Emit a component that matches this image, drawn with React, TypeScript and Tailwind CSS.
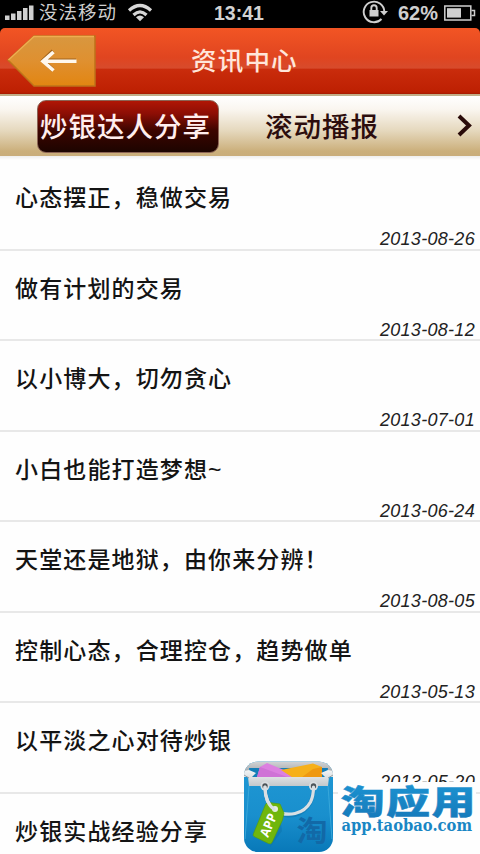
import React from "react";

const articles = [
  { title: "心态摆正，稳做交易", date: "2013-08-26" },
  { title: "做有计划的交易", date: "2013-08-12" },
  { title: "以小博大，切勿贪心", date: "2013-07-01" },
  { title: "小白也能打造梦想~", date: "2013-06-24" },
  { title: "天堂还是地狱，由你来分辨！", date: "2013-08-05" },
  { title: "控制心态，合理控仓，趋势做单", date: "2013-05-13" },
  { title: "以平淡之心对待炒银", date: "2013-05-20" },
  { title: "炒银实战经验分享", date: "" },
];

function StatusBar() {
  return (
    <div className="flex h-[28px] shrink-0 items-center bg-black text-[#cfcfcf]">
      <svg className="mb-[3px] ml-[4px] h-[18px] w-[31px] shrink-0" viewBox="0 0 31 18" fill="#cfcfcf">
        <rect x="1" y="11.5" width="4.5" height="4.500" />
        <rect x="7" y="9.5" width="4.5" height="6.500" />
        <rect x="13" y="7" width="4.5" height="9" />
        <rect x="19" y="4" width="4.5" height="12" />
        <rect x="25" y="1.5" width="4.5" height="14.5" />
      </svg>
      <span className="mb-[2px] ml-[4px] w-[80px] shrink-0 whitespace-nowrap text-[18.5px] leading-[26px] tracking-[1px]">没法移动</span>
      <svg className="mb-[3px] ml-[8px] h-[20px] w-[26px] shrink-0" viewBox="0 0 26 20" fill="none" stroke="#d6d6d6" strokeWidth="3.2">
        <path d="M2 7.5Q13-2.500 24 7.500" />
        <path d="M6.500 12Q13 5.800 19.500 12" />
        <path d="M13 18.200l-4-4q4-3.400 8 0z" fill="#d6d6d6" stroke="none" />
      </svg>
      <svg className="ml-[60px] h-[28px] w-[54px] shrink-0" viewBox="0 0 54 28">
        <text x="1" y="19.500" textLength="50" lengthAdjust="spacingAndGlyphs" fontSize="20" fontWeight="700" fill="#d2d2d2" fontFamily="Liberation Sans, Arial, sans-serif">13:41</text>
      </svg>
      <svg className="mb-[4px] ml-[94px] h-[26px] w-[28px] shrink-0" viewBox="0 0 28 26" fill="none" stroke="#cfcfcf" strokeWidth="1.900">
        <path d="M20.500 20A10.300 10.300 0 1 1 23.300 12.500" />
        <path d="M19 12h8l-4 4.500z" fill="#cfcfcf" stroke="none" />
        <rect x="8.500" y="11" width="9" height="6.500" fill="#cfcfcf" stroke="none" />
        <path d="M10.300 11.500V9a2.700 2.700 0 0 1 5.400 0v2.500" />
      </svg>
      <svg className="ml-[8px] h-[28px] w-[44px] shrink-0" viewBox="0 0 44 28">
        <text x="1" y="19.500" textLength="40" lengthAdjust="spacingAndGlyphs" fontSize="20" fontWeight="700" fill="#cfcfcf" fontFamily="Liberation Sans, Arial, sans-serif">62%</text>
      </svg>
      <svg className="mb-[3px] ml-[2px] h-[18px] w-[34px] shrink-0" viewBox="0 0 34 18" fill="none" stroke="#cfcfcf" strokeWidth="1.500">
        <rect x="1.800" y="2" width="26" height="14" />
        <rect x="4" y="4.200" width="14" height="9.400" fill="#cfcfcf" stroke="none" />
        <path d="M28.500 6.500h3v5h-3" />
      </svg>
    </div>
  );
}

function Header() {
  return (
    <div className="flex h-[66px] shrink-0 items-center rounded-t-[5px] bg-[linear-gradient(180deg,#f25524_0%,#e04520_45%,#d74b2c_61%,#ca2c0c_62%,#bd2002_97%,#a51b00_100%)]">
      <svg className="ml-[7px] h-[54px] w-[90px] shrink-0" viewBox="0 0 90 54">
        <defs>
          <linearGradient id="back" x1="0" y1="0" x2="0" y2="1">
            <stop offset="0" stopColor="#d8973f" />
            <stop offset="0.500" stopColor="#df9030" />
            <stop offset="1" stopColor="#e28511" />
          </linearGradient>
        </defs>
        <path d="M1 26L27 2H88V52H27Z" fill="url(#back)" stroke="#bd731a" strokeWidth="1.500" />
        <path d="M1.500 26L27 2.500H87" fill="none" stroke="#efad51" strokeWidth="1.500" />
        <path d="M69 26.500H36M46 17L36 26.500L46 36" fill="none" stroke="#a1641c" strokeWidth="3.800" />
        <path d="M69.500 27.300H36M46.500 18L36 27.300L46.500 36.500" fill="none" stroke="#fff8ed" strokeWidth="3.600" />
      </svg>
      <h1 className="ml-[94px] whitespace-nowrap text-[25.5px] leading-[40px] font-medium tracking-[1.2px] text-[#ffe6da]">资讯中心</h1>
    </div>
  );
}

function Tabs() {
  return (
    <nav className="flex h-[62px] shrink-0 items-center border-t-2 border-[#c1ae88] bg-[linear-gradient(180deg,#fff_0%,#faf6f0_22%,#e5d8bd_58%,#cbaf7b_92%,#c9ad7b_100%)]">
      <div className="ml-[37px] flex h-[53px] w-[182px] shrink-0 items-center justify-start rounded-[9px] border border-[#8c6455] bg-[linear-gradient(180deg,#b01605_0%,#8c0e05_25%,#3c0500_58%,#1c0400_100%)] pt-[3px] pl-[2px]">
        <span className="whitespace-nowrap text-[27.500px] leading-[40px] font-medium tracking-[1px] text-[#ffeeee]">炒银达人分享</span>
      </div>
      <span className="mt-[3px] ml-[46px] w-[118px] shrink-0 whitespace-nowrap text-[27.500px] leading-[40px] font-medium tracking-[1px] text-[#2c0d0d]">滚动播报</span>
      <svg className="ml-[72px] h-[26px] w-[20px]" viewBox="0 0 20 26" fill="none" stroke="#2a0b09" strokeWidth="4">
        <path d="M4 3L14 12.500L4 22" />
      </svg>
    </nav>
  );
}

function Watermark() {
  return (
    <svg className="absolute bottom-0 left-[240px] h-[100px] w-[240px]" viewBox="240 754 240 100">
      <defs>
        <linearGradient id="bag" x1="0" y1="0" x2="0" y2="1">
          <stop offset="0" stopColor="#2099d5" />
          <stop offset="0.600" stopColor="#198fcd" />
          <stop offset="1" stopColor="#0878b8" />
        </linearGradient>
        <linearGradient id="rim" x1="0" y1="0" x2="0" y2="1">
          <stop offset="0" stopColor="#f3f5f6" />
          <stop offset="1" stopColor="#c3c8cb" />
        </linearGradient>
        <linearGradient id="inside" x1="0" y1="0" x2="0" y2="1">
          <stop offset="0" stopColor="#d4d6d8" />
          <stop offset="1" stopColor="#999da0" />
        </linearGradient>
        <linearGradient id="word" x1="0" y1="0" x2="0" y2="1">
          <stop offset="0" stopColor="#1d98d6" />
          <stop offset="1" stopColor="#1577b8" />
        </linearGradient>
        <clipPath id="bagShape">
          <rect x="244" y="761.500" width="89" height="90.500" rx="14" />
        </clipPath>
      </defs>
      <rect x="338" y="782" width="138" height="54" fill="#fefefe" />
      <g clipPath="url(#bagShape)">
        <rect x="244" y="761" width="89" height="92" fill="url(#bag)" />
        <path d="M244 761H333V775L326 768H251L244 775Z" fill="url(#inside)" />
        <path d="M249 768H328L326 780H251Z" fill="#147eb7" />
        <path d="M257 777L260 767L267 763L296 775L302 781H257Z" fill="#dc80e0" />
        <path d="M257 777L260 767L290 778H257Z" fill="#cf72d6" />
        <path d="M281 770L313 763.500L322 767V781H298Z" fill="#f6b01a" />
        <path d="M298 780L313 769L322 767V781Z" fill="#ef9810" />
        <path d="M244 771L249 770L256 773L252 777H325L321 773L328 770L333 771V777L329 777L328 786H249L248 777H244Z" fill="url(#rim)" />
        <path d="M249 786L245 839M328 786L332 839" stroke="#38a7da" strokeWidth="1" />
        <path d="M244 775L249 778M328 778L333 775" stroke="#939da3" strokeWidth="1" />
        <text x="296.500" y="842" fontSize="29" fontWeight="700" textLength="31" lengthAdjust="spacingAndGlyphs" fill="#1269a7" fontFamily="Noto Sans CJK SC, sans-serif">淘</text>
        <path d="M280 816L282 831L270 847L278 819Z" fill="#0d6299" opacity="0.300" />
      </g>
      <path d="M265 786C265 802 273 815 288 815.500C305 816 314 803 313.500 786" fill="none" stroke="#0e70a7" strokeWidth="4" opacity="0.500" />
      <circle cx="265" cy="786" r="4.500" fill="#d9dee1" />
      <circle cx="313.500" cy="786" r="4.500" fill="#d9dee1" />
      <circle cx="265" cy="786" r="2.700" fill="#4c5459" />
      <circle cx="313.500" cy="786" r="2.700" fill="#4c5459" />
      <path d="M265 787C265 798 269 806 274 810C288 818 304 814 310.500 802Q313.500 796 313.500 787" fill="none" stroke="#d9dfe3" strokeWidth="3.200" strokeLinecap="round" />
      <path d="M265.500 804.500Q266.500 802.500 269 802.500L280 804L284 813L282.500 820L272 842.500Q271 844.500 268.500 843.500L254 836.500Q252.500 835.500 253.500 833.500Z" fill="#70b60c" stroke="#529d12" strokeWidth="0.700" />
      <circle cx="275" cy="809" r="3" fill="#e6edde" />
      <path d="M265 787C265 798 269 806 274 809" fill="none" stroke="#d9dfe3" strokeWidth="3.200" strokeLinecap="round" />
      <text x="268" y="838" transform="rotate(-67 268 838)" fontSize="13" fontWeight="700" textLength="24" lengthAdjust="spacingAndGlyphs" fill="white" fontFamily="Open Sans, sans-serif">APP</text>
      <g transform="translate(340.5 813.5) scale(1 .75)">
        <text x="0" y="0" fontSize="44" textLength="135" lengthAdjust="spacing" fontWeight="900" fill="url(#word)" stroke="url(#word)" strokeWidth="0.600" fontFamily="Noto Sans CJK SC, sans-serif">淘应用</text>
      </g>
      <text x="341.500" y="831" fontSize="17" fontWeight="700" textLength="130.500" lengthAdjust="spacingAndGlyphs" fill="#1986c4" fontFamily="DejaVu Serif, serif">app.taobao.com</text>
    </svg>
  );
}

export default function App() {
  return (
    <main className="relative flex h-[854px] w-[480px] flex-col overflow-hidden bg-[#fefefe] font-['Liberation_Sans','Noto_Sans_CJK_SC',sans-serif]">
      <div className="flex shrink-0 flex-col bg-black">
        <StatusBar />
        <Header />
      </div>
      <Tabs />
      <div className="h-[4px] shrink-0 bg-gradient-to-b from-[#eeeeee] to-[#fefefe]" />
      <ul className="flex flex-col">
        {articles.map((item) => (
          <li key={item.title} className="flex h-[90.5px] shrink-0 flex-col border-b-2 border-[#e8e8e8]">
            <h2 className="ml-[15px] mt-[20px] h-[36px] whitespace-nowrap text-[23px] leading-[36px] font-medium tracking-[1.13px] text-[#141414]">{item.title}</h2>
            <time className="mr-[5px] mt-[12px] self-end text-[18px] leading-[22px] tracking-[0.3px] text-[#222] italic">{item.date}</time>
          </li>
        ))}
      </ul>
      <Watermark />
    </main>
  );
}
